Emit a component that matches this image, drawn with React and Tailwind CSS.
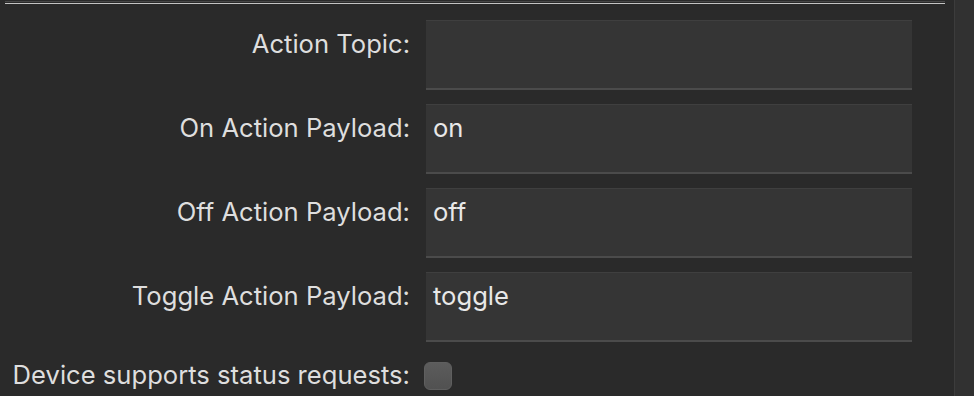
import React from "react";

const fields = [
  { label: "Action Topic:", value: "" },
  { label: "On Action Payload:", value: "on" },
  { label: "Off Action Payload:", value: "off" },
  { label: "Toggle Action Payload:", value: "toggle" },
];

const App = () => {
  return (
    <div
      className="flex w-[974px] h-[396px] bg-[#2a2a2a] overflow-hidden"
      style={{ fontFamily: "Inter, 'Liberation Sans', sans-serif" }}
    >
      <div className="w-[954px] flex flex-col">
        {/* separator lines */}
        <div className="ml-[5px] w-[940px] mt-[1px] border-t border-[#474747]" />
        <div className="ml-[5px] w-[940px] mt-[1px] border-t border-[#c4c4c4]" />

        <div className="flex flex-col gap-[14px] mt-[16px]">
          {fields.map((f) => (
            <div key={f.label} className="flex items-start gap-4">
              <label className="w-[410px] text-right text-[25.6px] leading-[30px] pt-[9px] text-[#dedede]">
                {f.label}
              </label>
              <div className="w-[486px] h-[70px] bg-[#353535] border-t border-[#3f3f3f] border-b-2 border-b-[#4b4b4b] pl-[7px] pt-[8px] text-[25.6px] leading-[30px] text-[#e8e8e8]">
                {f.value}
              </div>
            </div>
          ))}
        </div>

        <div className="flex items-center gap-[14px] mt-[20px]">
          <label className="w-[410px] text-right text-[25.6px] leading-[30px] -mt-[3px] text-[#dedede]">
            Device supports status requests:
          </label>
          <span className="w-[28px] h-[28px] rounded-[6px] bg-gradient-to-b from-[#5c5c5c] to-[#515151] border border-[#5f5f5f]" />
        </div>
      </div>
      <div className="flex-1 border-l border-[#3c3c3c] bg-[#313131]" />
    </div>
  );
};

export default App;
